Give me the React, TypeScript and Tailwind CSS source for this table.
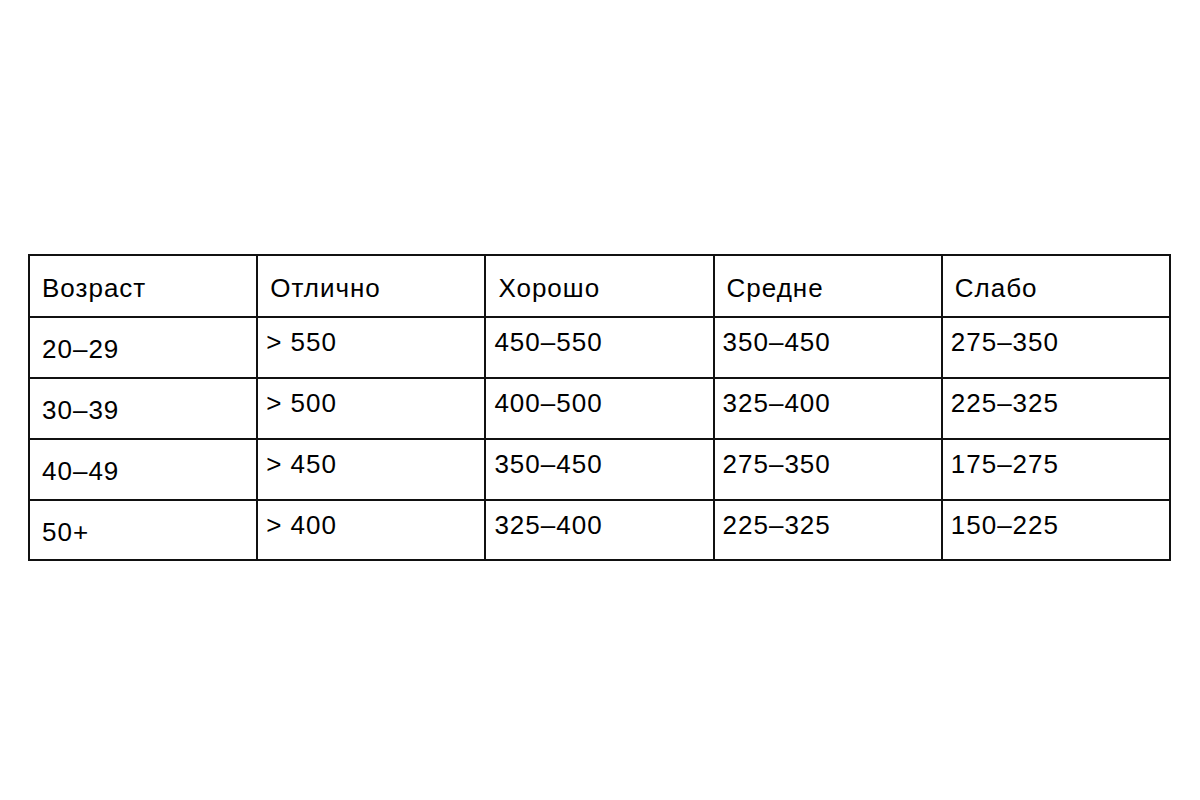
const header = ["Возраст", "Отлично", "Хорошо", "Средне", "Слабо"]

const rows = [
  ["20–29", "> 550", "450–550", "350–450", "275–350"],
  ["30–39", "> 500", "400–500", "325–400", "225–325"],
  ["40–49", "> 450", "350–450", "275–350", "175–275"],
  ["50+", "> 400", "325–400", "225–325", "150–225"],
]

export default function App() {
  return (
    <div className="w-[1200px] h-[800px] bg-white pt-[254px] pl-[28px] text-black" style={{ fontFamily: '"Liberation Sans", Arial, sans-serif' }}>
      <table className="border-collapse table-fixed w-[1143px] text-[26px] tracking-[1px]">
        <thead>
          <tr className="h-[62px]">
            {header.map((h) => (
              <th key={h} className="border-2 border-[#111] font-normal text-left align-middle pl-[12px] pt-[4px]">
                {h}
              </th>
            ))}
          </tr>
        </thead>
        <tbody>
          {rows.map((r, ri) => (
            <tr key={r[0]} className={ri === 3 ? "h-[60px]" : "h-[61px]"}>
              <td className="border-2 border-[#111] align-middle pl-[12px] pt-[4px]">{r[0]}</td>
              {r.slice(1).map((v, i) => (
                <td key={i} className="border-2 border-[#111] align-top pl-[8px] pt-[5px]">
                  {v}
                </td>
              ))}
            </tr>
          ))}
        </tbody>
      </table>
    </div>
  )
}
